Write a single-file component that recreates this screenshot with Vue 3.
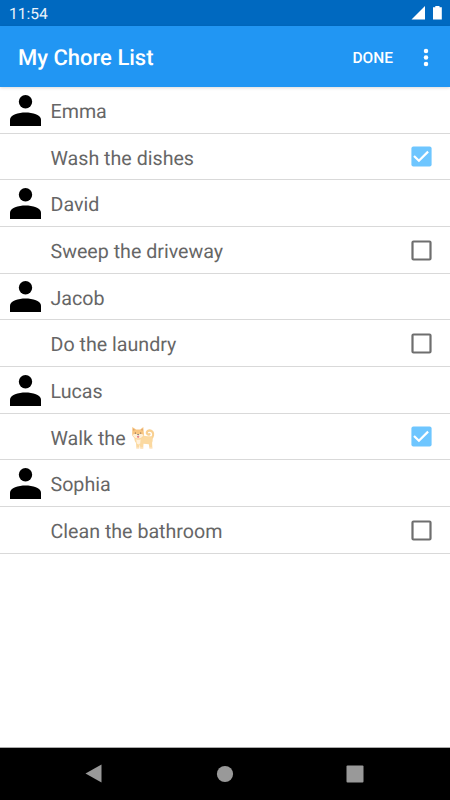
<script setup>
const people = [
  { name: 'Emma', chore: 'Wash the dishes', done: true },
  { name: 'David', chore: 'Sweep the driveway', done: false },
  { name: 'Jacob', chore: 'Do the laundry', done: false },
  { name: 'Lucas', chore: 'Walk the', dog: true, done: true },
  { name: 'Sophia', chore: 'Clean the bathroom', done: false },
]
</script>

<template>
  <div class="screen">
    <header class="status">
      <span class="clock">11:54</span>
      <svg class="signals" width="32" height="16" viewBox="0 0 32 16">
        <path d="M0.5 14.5 L14 1V14.5Z" />
        <path d="M22 2.2h2.3V1h4.2v1.2h2.3v12.4H22z" />
      </svg>
    </header>
    <div class="toolbar">
      <h1>My Chore List</h1>
      <button class="done">DONE</button>
      <svg class="more" width="6" height="20" viewBox="0 0 6 20">
        <circle cx="3" cy="3" r="2.25" /><circle cx="3" cy="9.5" r="2.25" /><circle cx="3" cy="16" r="2.25" />
      </svg>
    </div>
    <main class="list">
      <template v-for="p in people" :key="p.name">
        <div class="row">
          <svg class="person" width="31" height="31" viewBox="0 0 31 31">
            <circle cx="15.5" cy="6.8" r="6.7" />
            <path d="M0 31V24.6C0 20 8.5 17.6 15.5 17.6S31 20 31 24.6V31z" />
          </svg>
          <span class="label">{{ p.name }}</span>
        </div>
        <div class="row chore">
          <span class="label">{{ p.chore }}</span>
          <svg v-if="p.dog" class="dog" width="24" height="24" viewBox="0 0 24 24">
            <path d="M20 12.5c2.2-1.7 2.7-4.8 1.3-6.8-1.5-1.8-4.7-1.5-5.4.4-.5 1.8 1.2 3 2.6 2.1" fill="none" stroke="#f8d092" stroke-width="2.3" stroke-linecap="round" />
            <path d="M3.5 10 12 9.6c3 1 6 .6 8.7.6 1.3 2.2 1.3 4.5.4 6.5l.3 5.8h-2.9l-.7-4.3-5.3-.4-.3 4.9H9.4L8.8 18l-.6 4.5H5.4L5 17c-1.6-1.8-2-4.5-1.5-7z" fill="#fbd9a0" />
            <path d="M1.2 8.2 1.3 1l3.9 2.4h4L12.3 1l.6 7.2c0 2.8-2.6 4.4-5.8 4.4S1.2 11 1.2 8.2z" fill="#f9c680" />
            <path d="m2.1 4.8.1-2.3L4.1 4zm9.7 0-.2-2.3L9.8 4z" fill="#dba26b" />
            <path d="M1.7 8.8c1-1.2 2.6-.8 3.9-.8h3c1.3-.1 2.8-.3 3.8.8-.2 2.4-2.4 3.8-5.3 3.8s-5-1.5-5.4-3.8z" fill="#fff0d6" />
            <path d="M5.2 13.2c1.3.8 3.1.8 4.4 0l-.4 4.3-1.8 1-1.6-1z" fill="#fff1dc" />
            <circle cx="4.4" cy="7" r=".6" fill="#68534b" /><circle cx="9.7" cy="7" r=".6" fill="#68534b" />
            <path d="M5.9 8.3h2.4L7.1 9.5z" fill="#58515a" />
            <path d="M6 9.9h2.2v.9a1.1 1.1 0 0 1-2.2 0z" fill="#e9818b" />
            <path d="M5.3 21.4h2.9v1.1H5.3zM9.4 21.4h2.8v1.1H9.4zM18.5 21.4h2.9v1.1h-2.9z" fill="#ffe8ce" />
          </svg>
          <svg class="check" width="21" height="21" viewBox="0 0 21 21">
            <template v-if="p.done">
              <rect x=".4" y=".4" width="20.2" height="20.2" rx="2" fill="#6ec6ff" />
              <path d="m3 10 4.9 4.8 9.2-9.2" fill="none" stroke="#fff" stroke-width="2.2" />
            </template>
            <rect v-else x="1.5" y="1.5" width="18" height="18" rx="1" fill="none" stroke="#6e6e6e" stroke-width="2.2" />
          </svg>
        </div>
      </template>
    </main>
    <nav class="navbar">
      <svg width="18" height="20" viewBox="0 0 18 20"><path d="M.5 9.5 16.5.5v18z" /></svg>
      <svg width="18" height="18" viewBox="0 0 18 18"><circle cx="9" cy="9" r="8.1" /></svg>
      <svg width="18" height="18" viewBox="0 0 18 18"><rect x=".5" y=".5" width="17" height="17" rx="1" /></svg>
    </nav>
  </div>
</template>

<style>
body { margin: 0; }
</style>

<style scoped>
.screen {
  display: flex;
  flex-direction: column;
  width: 450px;
  height: 800px;
  overflow: hidden;
  background: #fff;
  font-family: Roboto, sans-serif;
  text-rendering: geometricPrecision;
}
.status {
  display: flex;
  align-items: center;
  justify-content: space-between;
  box-sizing: border-box;
  height: 26px;
  padding: 2px 9px 0;
  background: #0069c0;
  color: #fff;
}
.clock { font-size: 15.6px; line-height: 24px; opacity: .92; }
.signals { margin-right: -2px; margin-top: -2px; fill: #fff; }
.toolbar {
  display: flex;
  align-items: center;
  box-sizing: border-box;
  height: 61px;
  padding: 2px 21px 0 18px;
  background: #2196f3;
  color: #fff;
  box-shadow: 0 1px 3px rgba(0, 0, 0, .15);
  flex: none;
}
h1 { margin: 0; padding-top: 2px; flex: 1; font-size: 22px; font-weight: 500; line-height: 28px; }
.done {
  margin: 0 30px 0 0;
  padding: 0;
  border: 0;
  background: none;
  color: #fff;
  font: 500 15.5px/20px Roboto, sans-serif;
  text-rendering: inherit;
}
.more { fill: #fff; }
.list { flex: 1; }
.row {
  display: flex;
  align-items: center;
  box-sizing: border-box;
  height: 46.67px;
  padding: 1px 18px 0 10px;
  border-bottom: 1px solid #d9d9d9;
  color: #666;
}
.person { margin-right: 9.5px; flex: none; }
.label { font-size: 19.65px; line-height: 26px; padding-top: 3.6px; }
.chore { padding-left: 50.5px; }
.dog { margin-left: 5px; margin-top: 2px; }
.check { margin-left: auto; }
.navbar {
  display: flex;
  align-items: center;
  justify-content: space-between;
  box-sizing: border-box;
  height: 53px;
  padding: 0 86px 0 85px;
  border-top: 1px solid #aaa;
  background: #000;
  fill: #999;
}
</style>
